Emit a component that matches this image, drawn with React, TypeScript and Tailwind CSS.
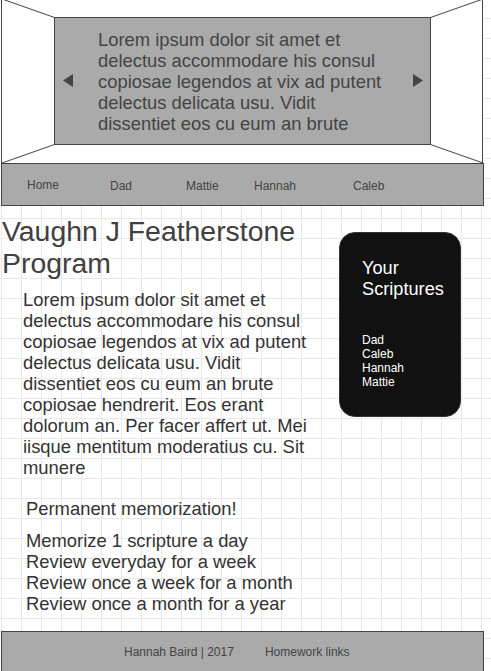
import React from "react";

const font = { fontFamily: '"Liberation Sans", Arial, Helvetica, sans-serif' };

function Tri({ dir }: { dir: "left" | "right" }) {
  return (
    <svg width="10" height="13" viewBox="0 0 10 13" className="shrink-0 -mt-[2px]">
      {dir === "left" ? (
        <polygon points="10,0 10,13 0,6.5" fill="#444" />
      ) : (
        <polygon points="0,0 0,13 10,6.5" fill="#444" />
      )}
    </svg>
  );
}

export default function App() {
  return (
    <div
      style={font}
      className="relative w-[491px] h-[671px] overflow-hidden bg-white bg-[linear-gradient(to_right,#e8e8e8_1px,transparent_1px),linear-gradient(to_bottom,#e8e8e8_1px,transparent_1px)] bg-[size:20px_20px] bg-[position:1px_18px] text-[#333]"
    >
      {/* Header / banner */}
      <div className="w-[484px] bg-white">
        <div className="relative ml-px w-[482px] h-[163px] border-x border-[#444] pt-[17px]">
          <svg
            className="absolute -left-[2px] top-0 pointer-events-none"
            width="491"
            height="163"
            viewBox="0 0 491 163"
          >
            <line x1="2" y1="-1" x2="54.5" y2="17.5" stroke="#444" strokeWidth="1" />
            <line x1="430.5" y1="17.5" x2="483" y2="-1" stroke="#444" strokeWidth="1" />
            <line x1="54.5" y1="144.5" x2="2" y2="163" stroke="#444" strokeWidth="1" />
            <line x1="430.5" y1="144.5" x2="483" y2="163" stroke="#444" strokeWidth="1" />
          </svg>
          <div className="relative ml-[52px] w-[377px] h-[128px] bg-[#aaaaaa] border border-[#444] flex items-center pl-[8px] pr-[7px]">
            <Tri dir="left" />
            <p className="ml-[25px] flex-1 text-[18.4px] leading-[21px] text-[#444]">
              Lorem ipsum dolor sit amet et
              <br />
              delectus accommodare his consul
              <br />
              copiosae legendos at vix ad putent
              <br />
              delectus delicata usu. Vidit
              <br />
              dissentiet eos cu eum an brute
            </p>
            <Tri dir="right" />
          </div>
        </div>
      </div>

      {/* Nav */}
      <div className="ml-px w-[483px] h-[43px] bg-[#aaaaaa] border border-[#444] flex items-center pl-[25px] pt-[3px] text-[12px] text-[#444]">
        <span className="w-[83px] pb-[2px]">Home</span>
        <span className="w-[76px]">Dad</span>
        <span className="w-[68px]">Mattie</span>
        <span className="w-[99px]">Hannah</span>
        <span>Caleb</span>
      </div>

      {/* Main */}
      <div className="flex">
        <div className="w-[339px] pl-[2px]">
          <h1 className="mt-[9px] text-[28.4px] leading-[32px] text-[#404040]">
            Vaughn J Featherstone
            <br />
            Program
          </h1>
          <p className="mt-[9.5px] pl-[21px] text-[18.4px] leading-[21px]">
            Lorem ipsum dolor sit amet et
            <br />
            delectus accommodare his consul
            <br />
            copiosae legendos at vix ad putent
            <br />
            delectus delicata usu. Vidit
            <br />
            dissentiet eos cu eum an brute
            <br />
            copiosae hendrerit. Eos erant
            <br />
            dolorum an. Per facer affert ut. Mei
            <br />
            iisque mentitum moderatius cu. Sit
            <br />
            munere
          </p>
          <p className="mt-[20px] pl-[24px] text-[18.4px] leading-[21px]">
            Permanent memorization!
          </p>
          <ul className="mt-[11px] pl-[24px] text-[18.4px] leading-[21px]">
            <li>Memorize 1 scripture a day</li>
            <li>Review everyday for a week</li>
            <li>Review once a week for a month</li>
            <li>Review once a month for a year</li>
          </ul>
        </div>
        <div className="mt-[26px] w-[122px] h-[185px] rounded-[16px] bg-[#111111] border border-[#333] pl-[22px] pt-[24.5px] text-white">
          <p className="text-[18.2px] leading-[21px]">
            Your
            <br />
            Scriptures
          </p>
          <ul className="mt-[33.5px] text-[12px] leading-[14px]">
            <li>Dad</li>
            <li>Caleb</li>
            <li>Hannah</li>
            <li>Mattie</li>
          </ul>
        </div>
      </div>

      {/* Footer */}
      <div className="mt-[17.5px] ml-px w-[483px] h-[60px] bg-[#aaaaaa] border border-[#444] pt-[13px] pl-[122px] flex gap-[31px] text-[12px] leading-[14px] text-[#444]">
        <span>Hannah Baird | 2017</span>
        <span>Homework links</span>
      </div>
    </div>
  );
}
